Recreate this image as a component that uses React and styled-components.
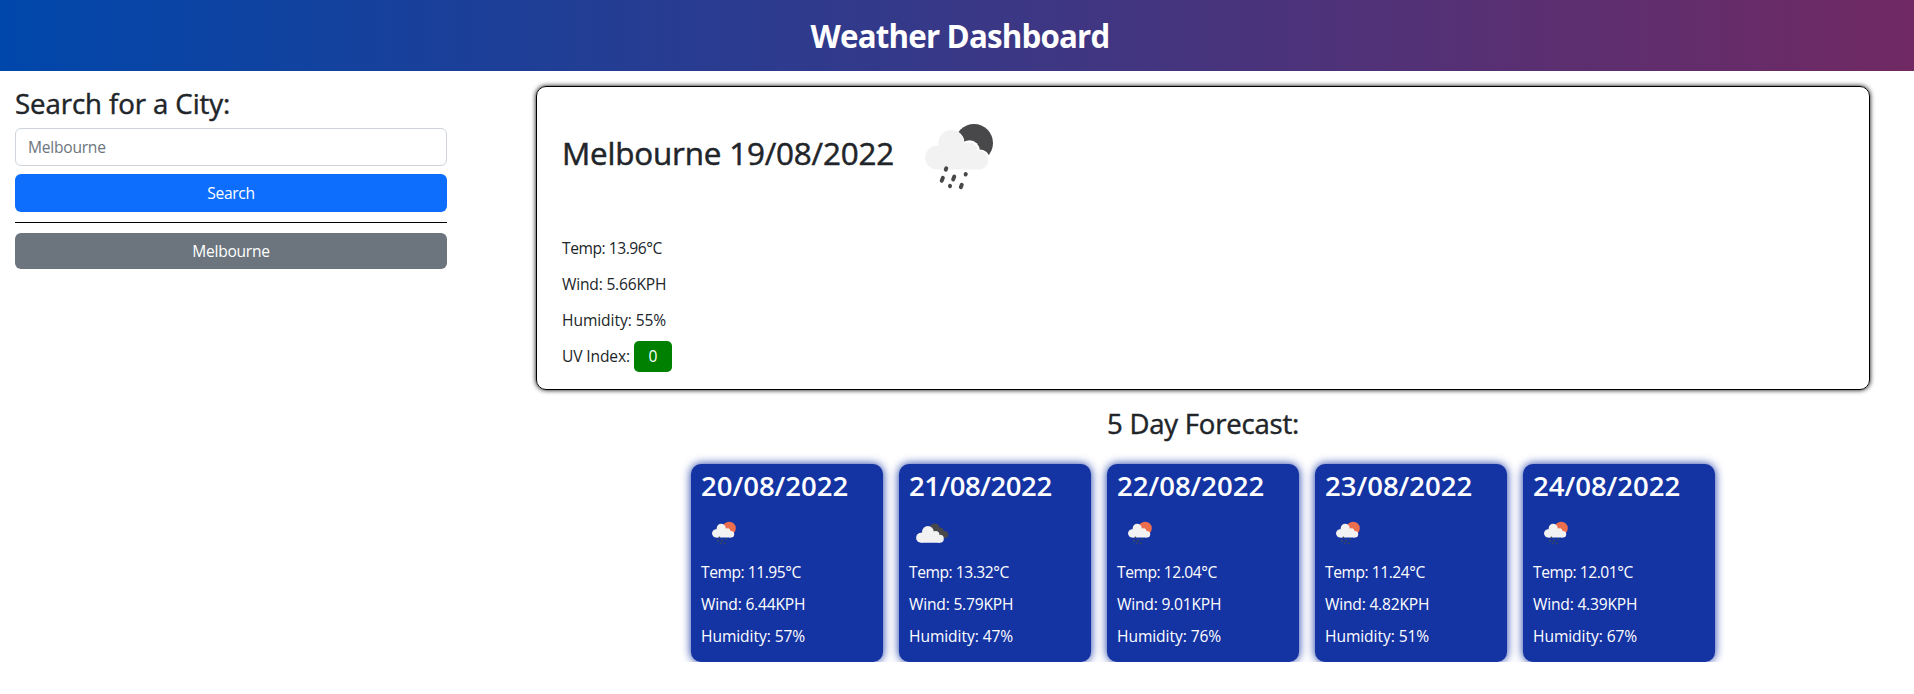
import React from "react";
import styled, { createGlobalStyle } from "styled-components";

const GlobalStyle = createGlobalStyle`
  *, *::before, *::after { box-sizing: border-box; }
  body {
    margin: 0;
    background: #fff;
    color: #212529;
    font-family: "Open Sans", "Noto Sans", sans-serif;
    font-size: 15.6px;
    line-height: 24px;
  }
`;

const Header = styled.header`
  display: flex;
  align-items: center;
  justify-content: center;
  height: 71px;
  padding-left: 6px;
  background: linear-gradient(90deg, #0047ab, #702963);
`;

const SiteTitle = styled.h1`
  margin: 0;
  color: #fff;
  font-size: 31.3px;
  font-weight: 700;
  line-height: 38px;
  letter-spacing: -0.83px;
`;

const Main = styled.main`
  display: flex;
  align-items: flex-start;
  padding: 15px 44px 0 15px;
`;

const Sidebar = styled.aside`
  display: flex;
  flex-direction: column;
  width: 432px;
  margin-right: 89px;
`;

const SectionTitle = styled.h2`
  margin: 0;
  font-size: 27.6px;
  font-weight: 500;
  line-height: 34px;
  letter-spacing: ${(p) => p.$track || 0}px;
  -webkit-text-stroke: 0.45px currentColor;
`;

const SearchInput = styled.input`
  height: 38px;
  margin: 8px 0;
  padding: 0 12px;
  border: 1px solid #ced4da;
  border-radius: 6px;
  background: #fff;
  font: inherit;
  letter-spacing: -0.25px;
  &::placeholder { color: #6c757d; opacity: 1; }
`;

const Button = styled.button`
  height: ${(p) => p.$height}px;
  padding: 0 12px;
  border: 0;
  border-radius: 6px;
  background: ${(p) => p.$color};
  color: #fff;
  font: inherit;
  letter-spacing: -0.28px;
`;

const Divider = styled.hr`
  width: 100%;
  height: 1px;
  margin: 10px 0;
  border: 0;
  background: #000;
`;

const Content = styled.section`
  flex: 1;
  display: flex;
  flex-direction: column;
  align-items: center;
`;

const CurrentCard = styled.article`
  width: 100%;
  height: 304px;
  padding: 16px 25px;
  border: 1px solid #000;
  border-radius: 10px;
  box-shadow: 0 0 5px #000;
`;

const CurrentHeading = styled.div`
  display: flex;
  align-items: center;
  gap: 17px;
  margin-bottom: 33px;
`;

const CityTitle = styled.h2`
  width: 330px;
  margin: 0;
  white-space: nowrap;
  font-size: 31.4px;
  font-weight: 500;
  line-height: 38px;
  letter-spacing: -0.18px;
  -webkit-text-stroke: 0.5px currentColor;
`;

const Stats = styled.div`
  display: flex;
  flex-direction: column;
  gap: ${(p) => p.$gap}px;
`;

const Stat = styled.p`
  display: flex;
  align-items: center;
  height: 24px;
  margin: 0;
  white-space: pre;
  letter-spacing: ${(p) => p.$track}px;
`;

const UvBadge = styled.span`
  display: flex;
  align-items: center;
  justify-content: center;
  width: 38px;
  height: 31px;
  margin-left: 4px;
  border-radius: 5px;
  background: #008000;
  color: #fff;
`;

const ForecastTitle = styled(SectionTitle)`
  margin: 17px 0 23px;
  font-size: 27.5px;
`;

const ForecastRow = styled.div`
  display: flex;
  gap: 16px;
`;

const ForecastCard = styled.article`
  width: 192px;
  height: 198px;
  padding: 5px 10px;
  border-radius: 10px;
  background: #1434a4;
  box-shadow: 0 0 10px #1434a4;
  color: #fff;
`;

const ForecastDate = styled.h3`
  margin: 0 0 4px;
  font-size: 27.5px;
  font-weight: 600;
  line-height: 34px;
  letter-spacing: ${(p) => p.$track || 0}px;
`;

const Icon = styled.svg`
  display: block;
  flex: none;
  width: ${(p) => p.$size}px;
  height: ${(p) => p.$size}px;
  margin-bottom: ${(p) => p.$bottom || 0}px;
`;

const drops = [
  [37, 66, 0.8],
  [33.3, 76.3, 1.7],
  [44.7, 75, 1.7],
  [56.7, 71.3, 0.3],
  [41, 83, 0.2],
  [52.3, 83, 1.4],
];

function RainShape({ orb, gap }) {
  return (
    <>
      <circle cx="65" cy="40" r="19" fill={orb} />
      {gap && (
        <g fill={gap}>
          <circle cx="60.5" cy="47.5" r="10.2" />
          <circle cx="70.5" cy="57" r="10.6" />
          <circle cx="42.3" cy="40" r="13.2" />
        </g>
      )}
      <g fill="#f2f2f2">
        <circle cx="28" cy="54.6" r="11.8" />
        <circle cx="42.3" cy="40" r="12.9" />
        <circle cx="60" cy="48" r="8.5" />
        <circle cx="70" cy="57" r="9.4" />
        <path d="M28 44 L42 38 L60 44 L70 52 V66.4 H28 Z" />
      </g>
      <g stroke="#48484a" strokeWidth="3.9" strokeLinecap="round">
        {drops.map(([x, y, l]) => (
          <line key={x} x1={x - l * 0.35} y1={y + l * 0.9} x2={x + l * 0.35} y2={y - l * 0.9} />
        ))}
      </g>
    </>
  );
}

function SmallRain() {
  return (
    <Icon $size={50} $bottom={3} viewBox="0 0 50 50">
      <g transform="translate(5.4 7.3) scale(.35)">
        <RainShape orb="#ec6e4c" />
      </g>
    </Icon>
  );
}

function Cloudy() {
  return (
    <Icon $size={50} $bottom={3} viewBox="0 0 50 50">
      <g fill="#48484a">
        <circle cx="25.7" cy="21.3" r="4.9" />
        <circle cx="31.5" cy="23.9" r="3.1" />
        <circle cx="35.7" cy="27.5" r="3.6" />
        <path d="M25 18 L32 22 L36 25 V31 H25 Z" />
      </g>
      <g fill="#f2f2f2">
        <circle cx="12.1" cy="30.7" r="5" />
        <circle cx="18.9" cy="24.9" r="5.9" />
        <circle cx="26.7" cy="27.6" r="3.6" />
        <circle cx="30.8" cy="31.8" r="4" />
        <path d="M12 26 L19 23 L27 26 L31 29 V35.8 H12 Z" />
      </g>
    </Icon>
  );
}

const forecast = [
  { date: "20/08/2022", temp: "11.95", wind: "6.44", humidity: 57 },
  { date: "21/08/2022", temp: "13.32", wind: "5.79", humidity: 47, cloudy: true, track: -0.46 },
  { date: "22/08/2022", temp: "12.04", wind: "9.01", humidity: 76 },
  { date: "23/08/2022", temp: "11.24", wind: "4.82", humidity: 51 },
  { date: "24/08/2022", temp: "12.01", wind: "4.39", humidity: 67 },
];

export default function App() {
  return (
    <>
      <GlobalStyle />
      <Header>
        <SiteTitle>Weather Dashboard</SiteTitle>
      </Header>
      <Main>
        <Sidebar>
          <SectionTitle $track={-0.08}>Search for a City:</SectionTitle>
          <SearchInput placeholder="Melbourne" />
          <Button $height={38} $color="#0d6efd">Search</Button>
          <Divider />
          <Button $height={36} $color="#6c757d">Melbourne</Button>
        </Sidebar>
        <Content>
          <CurrentCard>
            <CurrentHeading>
              <CityTitle>Melbourne 19/08/2022</CityTitle>
              <Icon $size={100} viewBox="0 0 100 100">
                <RainShape orb="#48484a" gap="#fff" />
              </Icon>
            </CurrentHeading>
            <Stats $gap={12}>
              <Stat $track={-0.45}>Temp: 13.96°C</Stat>
              <Stat $track={-0.2}>Wind: 5.66KPH</Stat>
              <Stat $track={-0.08}>Humidity: 55%</Stat>
              <Stat $track={-0.15}>
                UV Index:<UvBadge>0</UvBadge>
              </Stat>
            </Stats>
          </CurrentCard>
          <ForecastTitle $track={-0.19}>5 Day Forecast:</ForecastTitle>
          <ForecastRow>
            {forecast.map((day) => (
              <ForecastCard key={day.date}>
                <ForecastDate $track={day.track}>{day.date}</ForecastDate>
                {day.cloudy ? <Cloudy /> : <SmallRain />}
                <Stats $gap={8}>
                  <Stat $track={-0.45}>Temp: {day.temp}°C</Stat>
                  <Stat $track={-0.2}>Wind: {day.wind}KPH</Stat>
                  <Stat $track={-0.08}>Humidity: {day.humidity}%</Stat>
                </Stats>
              </ForecastCard>
            ))}
          </ForecastRow>
        </Content>
      </Main>
    </>
  );
}
